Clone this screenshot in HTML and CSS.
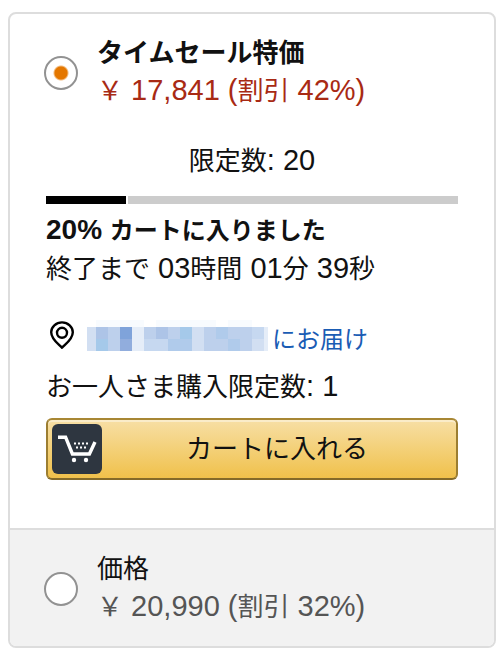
FILE: index.html
```html
<!DOCTYPE html>
<html lang="ja">
<head>
<meta charset="utf-8">
<meta name="viewport" content="width=device-width, initial-scale=1">
<title>タイムセール特価</title>
<link rel="stylesheet" href="styles.css">
</head>
<body>
<form class="buybox">
  <section class="panel">
    <label class="option">
      <input class="radio" type="radio" name="offer" checked>
      <span class="option-text">
        <span class="option-title option-title-deal">タイムセール特価</span>
        <span class="price price-deal">￥<span class="num"> 17,841 (</span>割引<span class="num"> 42%)</span></span>
      </span>
    </label>
    <p class="quantity">限定数<span class="num">: 20</span></p>
    <div class="progress"><div class="progress-fill"></div></div>
    <p class="claimed"><span class="num">20% </span>カートに入りました</p>
    <p class="line">終了まで<span class="num"> 03</span>時間<span class="num"> 01</span>分<span class="num"> 39</span>秒</p>
    <a class="delivery" href="#">
      <svg class="pin" width="26" height="30" viewBox="0 0 26 30" fill="none" stroke="#000" stroke-width="2.4">
        <path d="M13 26.8C10 23.4 2.2 18.4 2.2 11.2A10.8 9.8 0 0 1 23.8 11.2C23.8 18.4 16 23.4 13 26.8Z" stroke-linejoin="round"/>
        <circle cx="13" cy="11.8" r="5"/>
      </svg>
      <svg class="mosaic" width="181" height="31" viewBox="0 0 181 31" shape-rendering="crispEdges">
        <path fill="#f8fbfe" d="M9 0h48v7H9zM69 0h60v7H69zM141 0h24v7h-24z"/>
        <path fill="#d2dff2" d="M0 7h181v24H0z"/>
        <path fill="#adc4e7" d="M9 7h12v12H9zM69 7h12v12H69z"/>
        <path fill="#a5c9ea" d="M9 19h12v12H9zM93 7h12v12H93z"/>
        <path fill="#b0cbeb" d="M81 19h24v12H81zM129 7h12v12h-12zM141 19h12v12h-12z"/>
        <path fill="#bdd0ec" d="M21 7h12v24H21zM57 7h12v12H57zM81 7h12v12H81zM117 7h12v24h-12zM141 7h24v12h-24zM129 19h12v12h-12zM153 19h12v12h-12z"/>
        <path fill="#c6d8f0" d="M57 19h24v12H57zM165 7h12v12h-12z"/>
        <path fill="#7fa3da" d="M33 7h12v12H33z"/>
        <path fill="#91addd" d="M33 19h12v12H33z"/>
        <path fill="#e5edf8" d="M45 7h12v24H45zM177 7h4v24h-4z"/>
      </svg>
      <span>にお届け</span>
    </a>
    <p class="limit">お一人さま購入限定数<span class="num">: 1</span></p>
    <button class="cart-button" type="button">
      <span class="cart-icon">
        <svg width="50" height="50" viewBox="0 0 50 50" fill="none">
          <path d="M6 13.2h7.6L20.4 30h17L43 18" stroke="#fff" stroke-width="3.4"/>
          <path d="M22 19.5h15M24 23.5h11" stroke="#fff" stroke-width="2" stroke-dasharray="2 2"/>
          <circle cx="22" cy="36" r="2.2" fill="#fff"/>
          <circle cx="34" cy="36" r="2.2" fill="#fff"/>
        </svg>
      </span>
      <span class="cart-label">カートに入れる</span>
    </button>
  </section>
  <section class="panel panel-other">
    <label class="option">
      <input class="radio" type="radio" name="offer">
      <span class="option-text">
        <span class="option-title">価格</span>
        <span class="price">￥<span class="num"> 20,990 (</span>割引<span class="num"> 32%)</span></span>
      </span>
    </label>
  </section>
</form>
</body>
</html>
```
FILE: styles.css
```css
* { box-sizing: border-box; }
body {
  margin: 0;
  padding: 12px 8px 6px;
  background: #fff;
  color: #111;
  font-family: Inter, "Noto Sans CJK JP", sans-serif;
  font-size: 26px;
  line-height: 38px;
}
p { margin: 0; }
.num {
  font-family: "Liberation Sans", sans-serif;
  font-size: 29px;
  line-height: 1;
}
.buybox {
  border: 2px solid #ddd;
  border-radius: 8px;
  overflow: hidden;
}
.panel { padding: 20px 36px 48px; }
.panel-other {
  padding-bottom: 20px;
  border-top: 2px solid #ddd;
  background: #f2f2f2;
}
.option {
  display: flex;
  align-items: center;
  gap: 19px;
  margin-left: -2px;
}
.radio {
  appearance: none;
  flex: none;
  width: 34px;
  height: 34px;
  margin: 2px 0 0;
  border: 2px solid #929292;
  border-radius: 50%;
  background: #fff;
}
.radio:checked {
  background: radial-gradient(circle, #e47700 0 6px, #fff 8px);
}
.option-text { display: grid; }
.option-title-deal, .claimed { font-weight: 700; }
.claimed { font-size: 24px; }
.claimed .num { font-size: 28px; }
.price { color: #555; }
.price-deal { color: #a82a14; }
.quantity { margin-top: 32px; text-align: center; }
.progress {
  height: 8px;
  margin: 16px 0 8px;
  background: #ccc;
}
.progress-fill {
  box-sizing: content-box;
  width: 80px;
  height: 8px;
  border-right: 2px solid #fff;
  background: #000;
}
.delivery {
  display: flex;
  align-items: center;
  margin-top: 32px;
  color: #1a5cb4;
  font-size: 24px;
  text-decoration: none;
}
.pin { margin: 0 12px 8px 3px; }
.mosaic { margin: 0 4px 8px 0; }
.limit { margin: 9px 0 12px; }
.cart-button {
  display: flex;
  align-items: center;
  width: 100%;
  height: 62px;
  padding: 0 4px;
  border: 2px solid;
  border-color: #a88734 #9c7e31 #846a29;
  border-radius: 6px;
  background: linear-gradient(#f7dfa5, #f0c14b);
  box-shadow: inset 0 2px 0 #faecc9;
  color: #111;
  font: inherit;
}
.cart-icon {
  display: flex;
  border-radius: 6px;
  background: #2e3640;
}
.cart-label { flex: 1; }
```
